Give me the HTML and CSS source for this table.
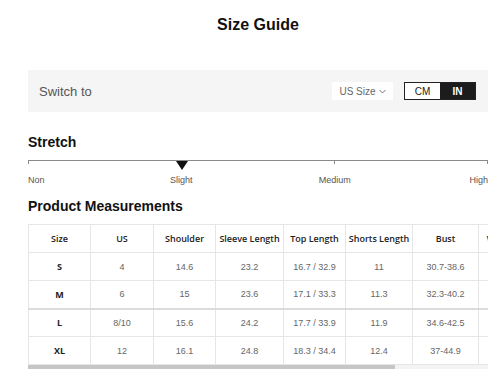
FILE: index.html
```html
<!DOCTYPE html>
<html lang="en">
<head>
<meta charset="utf-8">
<title>Size Guide</title>
<link rel="stylesheet" href="styles.css">
</head>
<body>
<div class="page">
  <h1 class="title">Size Guide</h1>

  <div class="switch-bar">
    <span class="switch-label">Switch to</span>
    <div class="switch-controls">
      <button class="size-select">US Size <svg class="chev" width="7" height="5" viewBox="0 0 7 5"><path d="M0.5 1 L3.5 4 L6.5 1" fill="none" stroke="#777" stroke-width="1"/></svg></button>
      <div class="unit-toggle">
        <span class="unit">CM</span>
        <span class="unit active">IN</span>
      </div>
    </div>
  </div>

  <h2 class="section-title stretch-title">Stretch</h2>
  <div class="stretch">
    <div class="track">
      <span class="tick-mid"></span>
      <span class="marker" style="left:33.33%"></span>
    </div>
    <div class="stretch-labels">
      <span class="lbl-non">Non</span>
      <span class="lbl-slight">Slight</span>
      <span class="lbl-medium">Medium</span>
      <span class="lbl-high">High</span>
    </div>
  </div>

  <h2 class="section-title measure-title">Product Measurements</h2>
  <div class="table-wrap">
    <table class="measure">
      <colgroup>
        <col style="width:62px"><col style="width:63px"><col style="width:62px"><col style="width:68px"><col style="width:62px"><col style="width:67px"><col style="width:66px"><col style="width:60px">
      </colgroup>
      <thead>
        <tr><th>Size</th><th>US</th><th>Shoulder</th><th>Sleeve Length</th><th>Top Length</th><th>Shorts Length</th><th>Bust</th><th>Waist Size</th></tr>
      </thead>
      <tbody>
        <tr><td class="sz">S</td><td>4</td><td>14.6</td><td>23.2</td><td>16.7 / 32.9</td><td>11</td><td>30.7-38.6</td><td>23.6-31.5</td></tr>
        <tr><td class="sz">M</td><td>6</td><td>15</td><td>23.6</td><td>17.1 / 33.3</td><td>11.3</td><td>32.3-40.2</td><td>25.2-33.1</td></tr>
        <tr class="thick"><td class="sz">L</td><td>8/10</td><td>15.6</td><td>24.2</td><td>17.7 / 33.9</td><td>11.9</td><td>34.6-42.5</td><td>27.6-35.4</td></tr>
        <tr><td class="sz">XL</td><td>12</td><td>16.1</td><td>24.8</td><td>18.3 / 34.4</td><td>12.4</td><td>37-44.9</td><td>29.9-37.8</td></tr>
      </tbody>
    </table>
  </div>
  <div class="hscroll"><span class="hscroll-thumb" style="width:367px"></span></div>
</div>
</body>
</html>
```

FILE: styles.css
```css
* { box-sizing: border-box; }

html, body {
  margin: 0;
  padding: 0;
  background: #ffffff;
}

body {
  font-family: "Liberation Sans", Arial, sans-serif;
  color: #222;
  overflow: hidden;
}

.page {
  width: 500px;
  padding: 15px 12px 0 28px;
}

.title {
  margin: 0;
  text-align: center;
  font-size: 16px;
  line-height: 20px;
  font-weight: 700;
  color: #111;
}

.switch-bar {
  margin-top: 35px;
  height: 42px;
  background: #f5f5f5;
  display: flex;
  align-items: center;
  justify-content: space-between;
  padding: 0 12px 0 11px;
}

.switch-label {
  font-size: 13px;
  color: #555;
}

.switch-controls {
  display: flex;
  align-items: center;
  gap: 11px;
}

.size-select {
  width: 61px;
  height: 18px;
  border: none;
  background: #fff;
  font-family: "Liberation Sans", Arial, sans-serif;
  font-size: 10px;
  color: #666;
  padding: 0;
  display: flex;
  align-items: center;
  justify-content: center;
  gap: 3px;
}

.chev { display: block; margin-top: 1px; }

.unit-toggle {
  display: flex;
  height: 18px;
  border: 1px solid #222;
  background: #fff;
}

.unit {
  width: 35px;
  display: flex;
  align-items: center;
  justify-content: center;
  font-size: 10px;
  color: #222;
}

.unit.active {
  background: #1c1c1c;
  color: #fff;
  font-weight: 700;
}

.section-title {
  margin: 0;
  font-size: 14px;
  line-height: 16px;
  font-weight: 700;
  color: #111;
}

.stretch-title { margin-top: 22px; }

.stretch {
  margin-top: 10px;
}

.track {
  position: relative;
  height: 4px;
  border-top: 1px solid #8a8a8a;
  border-left: 1px solid #8a8a8a;
  border-right: 1px solid #8a8a8a;
}

.tick-mid {
  position: absolute;
  left: 66.67%;
  top: 0;
  width: 1px;
  height: 3px;
  background: #8a8a8a;
}

.marker {
  position: absolute;
  top: 0;
  width: 0;
  height: 0;
  margin-left: -6px;
  border-left: 6px solid transparent;
  border-right: 6px solid transparent;
  border-top: 9px solid #111;
}

.stretch-labels {
  display: grid;
  grid-template-columns: repeat(6, 1fr);
  margin-top: 11px;
  font-size: 9px;
  line-height: 11px;
  color: #555;
}

.lbl-non { grid-column: 1; text-align: left; }
.lbl-slight { grid-column: 2 / span 2; text-align: center; }
.lbl-medium { grid-column: 4 / span 2; text-align: center; }
.lbl-high { grid-column: 6; text-align: right; }

.measure-title { margin-top: 12px; }

.table-wrap {
  margin-top: 10px;
  width: 460px;
  overflow: hidden;
}

.measure {
  border-collapse: collapse;
  table-layout: fixed;
  width: 510px;
}

.measure th,
.measure td {
  height: 28px;
  padding: 0 2px;
  border: 1px solid #e6e6e6;
  text-align: center;
  white-space: nowrap;
  font-size: 9px;
}

.measure th {
  font-family: "Open Sans", "Liberation Sans", sans-serif;
  font-weight: 600;
  color: #222;
}

.measure td {
  font-family: "Liberation Sans", Arial, sans-serif;
  color: #666;
}

.measure td.sz {
  font-family: "Open Sans", "Liberation Sans", sans-serif;
  font-weight: 700;
  color: #222;
}

.measure tr.thick td { border-top: 2px solid #dcdcdc; }

.hscroll {
  width: 460px;
  height: 4px;
  background: #f3f3f3;
}

.hscroll-thumb {
  display: block;
  height: 4px;
  background: #c6c6c6;
}
```
